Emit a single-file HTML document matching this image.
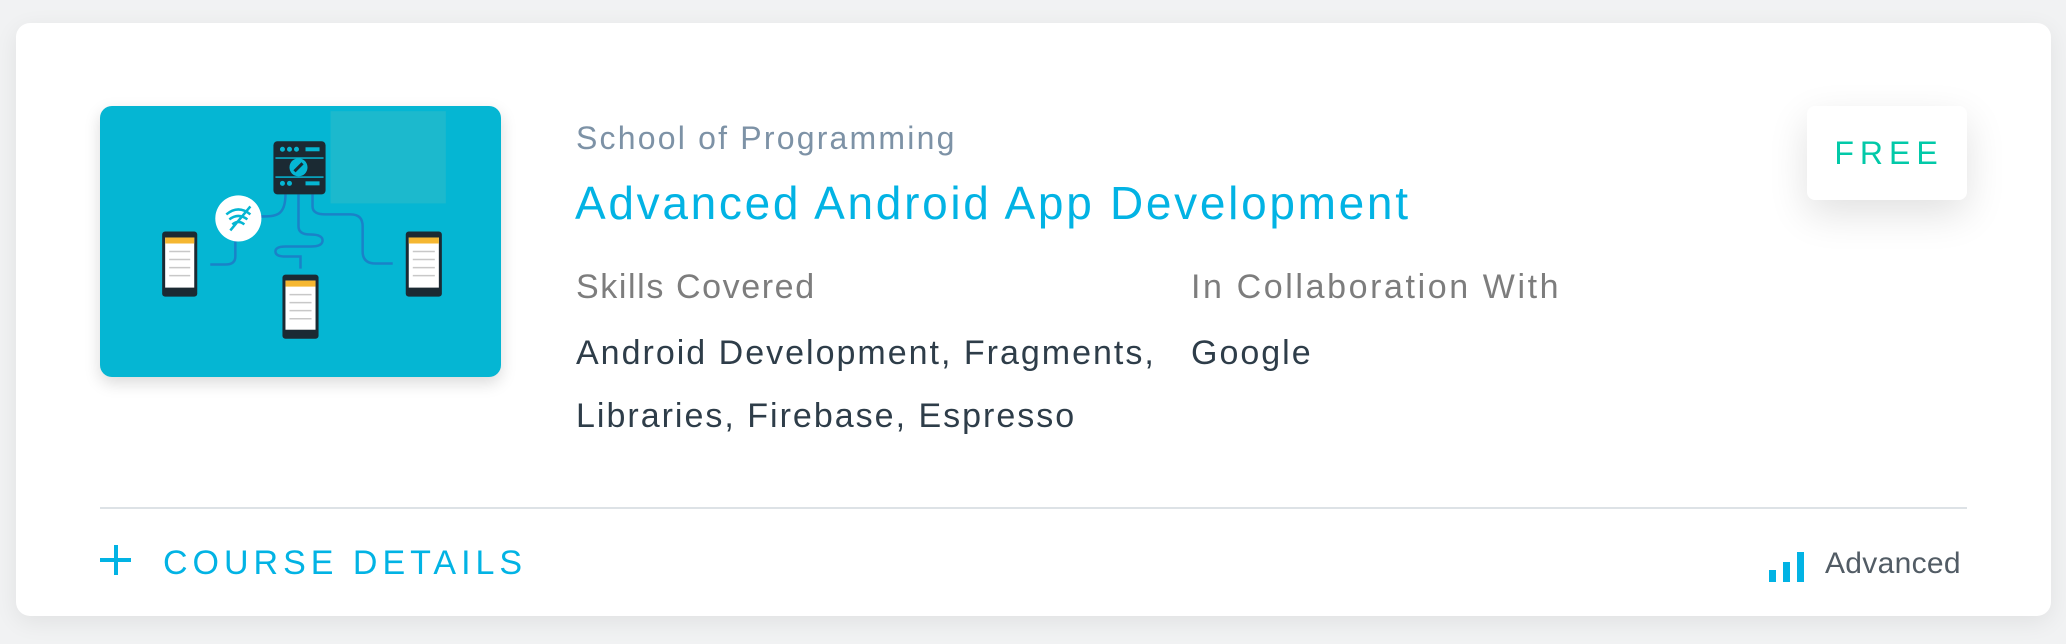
<!DOCTYPE html>
<html><head><meta charset="utf-8"><style>
html,body{margin:0;padding:0;width:2066px;height:644px;background:#f1f2f3;overflow:hidden}
body{font-family:"Liberation Sans",sans-serif;position:relative}
.card{position:absolute;left:16px;top:23px;width:2035px;height:593px;background:#fff;border-radius:14px;box-shadow:0 6px 24px rgba(0,0,0,.07)}
.abs{position:absolute;white-space:nowrap}
.img{position:absolute;left:100px;top:106px;width:401px;height:271px;border-radius:12px;overflow:hidden;background:#05b6d3;box-shadow:0 6px 16px rgba(0,0,0,.15)}
.free{position:absolute;left:1807px;top:106px;width:160px;height:94px;background:#fff;border-radius:8px;box-shadow:0 14px 40px rgba(0,0,0,.12);color:#02c9a8;font-size:32px;letter-spacing:6px;text-indent:4px;text-align:center;line-height:94px}
</style></head><body>
<div class="card"></div>
<div class="img">
<svg width="401" height="271" viewBox="0 0 400 270">
<rect x="230" y="5" width="115" height="92" fill="#1cb9cd"/>
<g fill="none" stroke="#1a82c8" stroke-width="2.5">
<path d="M185 88 C185 110 175 110 160 110"/>
<path d="M198 88 V120 Q198 128 210 128 Q222 128 222 134 Q222 140 210 140 H185 Q175 140 175 145 Q175 150 185 150 H200 V162"/>
<path d="M212 88 V100 Q212 108 225 108 H250 Q262 108 262 120 V145 Q262 157 275 157 H292"/>
<path d="M135 135 V150 Q135 158 125 158 H110"/>
</g>
<rect x="173" y="35" width="52" height="53" rx="4" fill="#1b2a33"/>
<g fill="#05b6d3"><circle cx="182" cy="43" r="2.5"/><circle cx="189" cy="43" r="2.5"/><circle cx="196" cy="43" r="2.5"/><rect x="205" y="41" width="14" height="4"/>
<circle cx="182" cy="77" r="2.5"/><circle cx="189" cy="77" r="2.5"/><rect x="205" y="75" width="14" height="4"/>
<rect x="175" y="51" width="48" height="1.5"/><rect x="175" y="70" width="48" height="1.5"/></g>
<circle cx="198" cy="61" r="9" fill="#05b6d3"/>
<path d="M194 65 L202 57" stroke="#1b2a33" stroke-width="3"/>
<circle cx="138" cy="112" r="23" fill="#fff"/>
<path d="M126 108 Q138 98 150 108 M129 113 Q138 106 147 113 M132 118 Q138 113 144 118 M130 124 L150 100" stroke="#05b6d3" stroke-width="2.5" fill="none"/>
<g>
<rect x="62" y="125" width="35" height="65" rx="3" fill="#1b2a33"/><rect x="65" y="131" width="29" height="50" fill="#fff"/><rect x="65" y="131" width="29" height="6" fill="#f5b731"/>
<rect x="182" y="168" width="36" height="64" rx="3" fill="#1b2a33"/><rect x="185" y="174" width="30" height="49" fill="#fff"/><rect x="185" y="174" width="30" height="6" fill="#f5b731"/>
<rect x="305" y="125" width="36" height="65" rx="3" fill="#1b2a33"/><rect x="308" y="131" width="30" height="50" fill="#fff"/><rect x="308" y="131" width="30" height="6" fill="#f5b731"/>
</g>
<g stroke="#c8c8c8" stroke-width="1.5"><path d="M69 145H90M69 153H90M69 161H90M69 169H90M189 188H211M189 196H211M189 204H211M189 212H211M312 145H334M312 153H334M312 161H334M312 169H334"/></g>
</svg>
</div>
<div class="abs" style="left:576px;top:120px;font-size:32px;color:#7d92a6;letter-spacing:2.2px">School of Programming</div>
<div class="abs" style="left:575px;top:176px;font-size:46px;color:#02b3e4;letter-spacing:2.7px">Advanced Android App Development</div>
<div class="abs" style="left:576px;top:268px;font-size:34px;color:#7d7d7d;letter-spacing:1.6px">Skills Covered</div>
<div class="abs" style="left:576px;top:322px;font-size:34px;color:#2e3d49;line-height:63px;letter-spacing:2px">Android Development, Fragments,<br>Libraries, Firebase, Espresso</div>
<div class="abs" style="left:1191px;top:268px;font-size:34px;color:#7d7d7d;letter-spacing:2.6px">In Collaboration With</div>
<div class="abs" style="left:1191px;top:322px;font-size:34px;color:#2e3d49;line-height:63px;letter-spacing:2px">Google</div>
<div class="free">FREE</div>
<div class="abs" style="left:100px;top:507px;width:1867px;height:2px;background:#dde2e6"></div>
<div class="abs" style="left:100px;top:558px;width:31px;height:4px;background:#02b3e4"></div>
<div class="abs" style="left:114px;top:545px;width:4px;height:30px;background:#02b3e4"></div>
<div class="abs" style="left:163px;top:544px;font-size:34px;color:#02b3e4;letter-spacing:5px">COURSE DETAILS</div>
<div class="abs" style="left:1769px;top:570px;width:7px;height:12px;background:#02b3e4"></div>
<div class="abs" style="left:1783px;top:562px;width:7px;height:20px;background:#02b3e4"></div>
<div class="abs" style="left:1797px;top:552px;width:7px;height:30px;background:#02b3e4"></div>
<div class="abs" style="left:1825px;top:547px;font-size:30px;color:#525c65;letter-spacing:0.3px">Advanced</div>
</body></html>
